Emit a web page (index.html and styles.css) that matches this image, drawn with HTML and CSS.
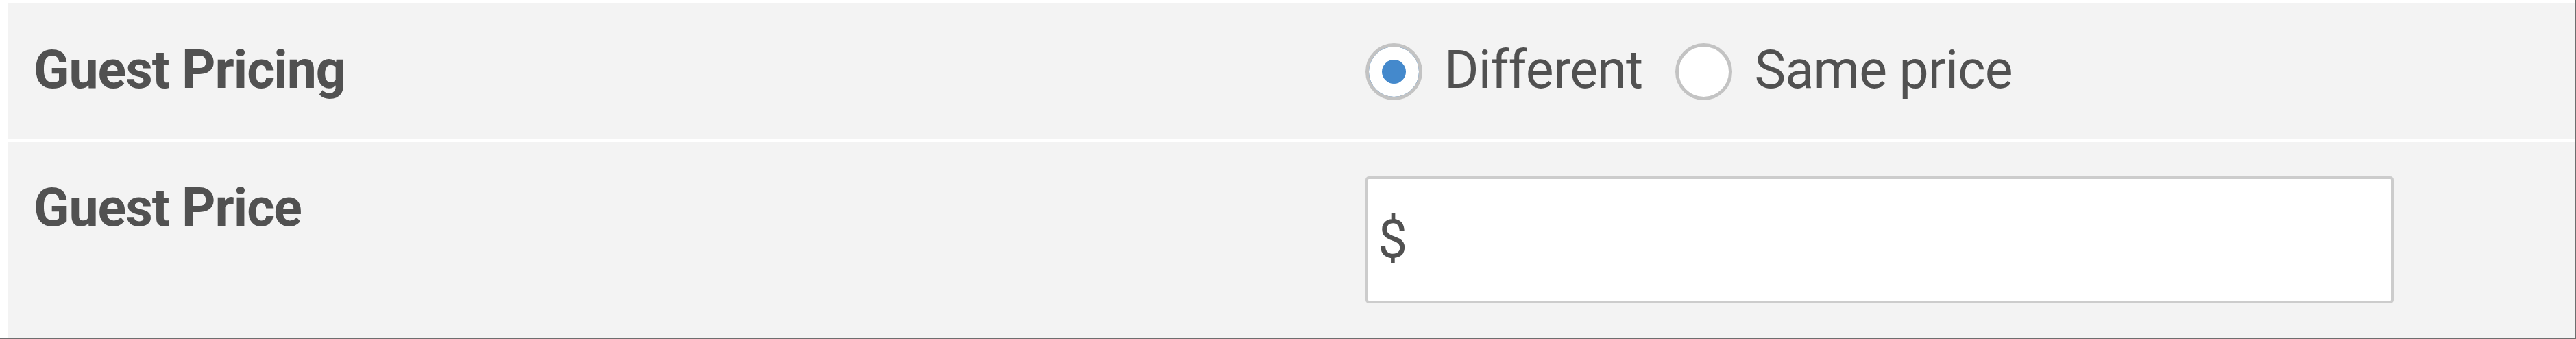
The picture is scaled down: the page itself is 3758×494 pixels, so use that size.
FILE: index.html
```html
<!DOCTYPE html>
<html lang="en">
<head>
  <meta charset="UTF-8" />
  <meta name="viewport" content="width=device-width, initial-scale=1.0" />
  <title>Guest Pricing</title>
  <link rel="stylesheet" href="styles.css">
</head>
<body>
  <div class="frame">
    <div class="form-row">
      <div class="row-label">Guest Pricing</div>
      <div class="row-field choices">
        <label class="choice">
          <input type="radio" name="guest_pricing" value="different" checked>
          <span>Different</span>
        </label>
        <label class="choice">
          <input type="radio" name="guest_pricing" value="same">
          <span>Same price</span>
        </label>
      </div>
    </div>

    <div class="form-row price-row">
      <div class="row-label">Guest Price</div>
      <div class="row-field">
        <div class="price-input">
          <span class="currency">$</span>
          <input type="text" id="guestPrice">
        </div>
      </div>
    </div>
  </div>
</body>
</html>
```

FILE: styles.css
```css
body {
  margin: 0;
  background: #fff;
  font-family: Roboto, "Liberation Sans", sans-serif;
  color: #515151;
}

.frame {
  box-sizing: border-box;
  width: 3758px;
  height: 494px;
  padding: 5px 0 0 12px;
  border-right: 2px solid #6e6e6e;
  border-bottom: 2px solid #6e6e6e;
}

.form-row {
  display: grid;
  grid-template-columns: 1980px 1fr;
  height: 196.8px;
  background: #f3f3f3;
  margin-bottom: 4.8px;
}

.price-row {
  height: 285px;
  margin-bottom: 0;
}

.row-label {
  padding: 43.7px 0 0 37px;
  font-size: 77px;
  font-weight: 700;
  line-height: 107.8px;
  letter-spacing: -1px;
}

.choices {
  display: flex;
  align-items: flex-start;
  gap: 48px;
  padding-top: 43.7px;
  font-size: 77px;
  line-height: 107.8px;
  letter-spacing: -0.8px;
}

.choice {
  display: flex;
  align-items: center;
  gap: 32px;
}

.choice input {
  appearance: none;
  -webkit-appearance: none;
  box-sizing: border-box;
  width: 83px;
  height: 83px;
  margin: 4px 0 0;
  border: 5px solid #c3c3c3;
  border-radius: 50%;
  background: #fff;
}

.choice input:checked {
  background: #4489cc;
  box-shadow: inset 0 0 0 19px #fff;
}

.price-row .row-field {
  display: flex;
  align-items: center;
}

.price-input {
  box-sizing: border-box;
  display: flex;
  align-items: center;
  width: 1500px;
  height: 185px;
  padding-left: 14px;
  background: #fff;
  border: 4.8px solid #cccccc;
  border-radius: 5px;
}

.currency {
  font-size: 77px;
  color: #515151;
}

.price-input input {
  flex: 1;
  height: 100%;
  border: none;
  outline: none;
  background: transparent;
  font-family: inherit;
  font-size: 77px;
  color: #515151;
}
```
